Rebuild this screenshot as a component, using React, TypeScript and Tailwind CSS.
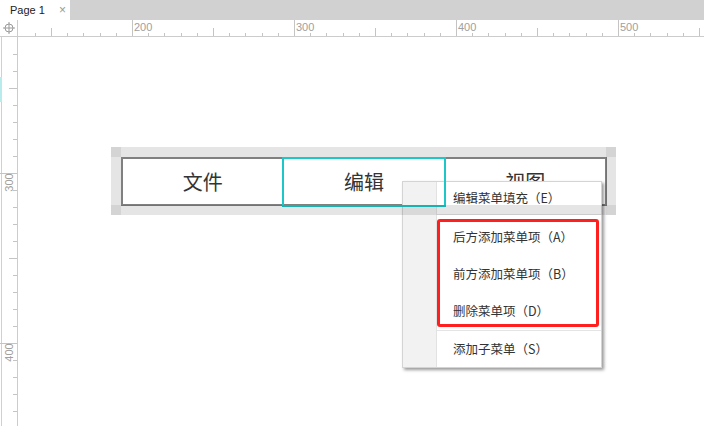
import React from 'react';

const TOP_TICKS = Array.from({ length: 46 }, (_, i) => i - 8).map((k) => ({
  x: 132 + k * 16.2,
  v: 200 + k * 10,
}));

const LEFT_TICKS = Array.from({ length: 25 }, (_, i) => i - 9).map((k) => ({
  y: 173 + k * 17,
  v: 300 + k * 10,
}));

function Crosshair() {
  return (
    <svg width="12" height="12" viewBox="0 0 12 12" className="text-[#9a9a9a]">
      <circle cx="6" cy="6" r="4" fill="none" stroke="currentColor" strokeWidth="1" />
      <path d="M6 0v12M0 6h12" stroke="currentColor" strokeWidth="1" />
    </svg>
  );
}

function TopRuler() {
  return (
    <div className="relative h-[17px] border-b border-[#cccccc] bg-white overflow-hidden">
      <div className="absolute left-0 top-0 w-[18px] h-full border-r border-[#cccccc] flex items-center justify-center bg-white z-10">
        <Crosshair />
      </div>
      {TOP_TICKS.filter((t) => t.x > 19 && t.x < 704).map((t) => {
        const major = t.v % 100 === 0;
        const mid = t.v % 50 === 0;
        return (
          <div key={t.v} className="absolute top-0 h-full" style={{ left: Math.round(t.x) }}>
            {major ? (
              <>
                <div className="absolute left-0 top-0 h-full w-px bg-[#c4c4c4]" />
                <span className="absolute left-[2px] top-[1px] text-[11px] leading-[12px] text-[#a0a0a0]">{t.v}</span>
              </>
            ) : (
              <div className={`absolute left-0 bottom-0 w-px bg-[#c4c4c4] ${mid ? 'h-[8px]' : 'h-[3px]'}`} />
            )}
          </div>
        );
      })}
    </div>
  );
}

function LeftRuler() {
  return (
    <div className="relative w-[18px] h-full border-r border-[#cccccc] bg-white overflow-hidden">
      <div className="absolute left-[1px] top-0 h-full w-px bg-[#d0d0d0]" />
      <div className="absolute left-0 top-[40px] h-[25px] w-[2px] bg-[#b8ecec]" />
      {LEFT_TICKS.filter((t) => t.y > 38 && t.y < 420).map((t) => {
        const major = t.v % 100 === 0;
        const mid = t.v % 50 === 0;
        const top = t.y - 37;
        return (
          <div key={t.v} className="absolute left-0 w-full" style={{ top }}>
            {major ? (
              <>
                <div className="absolute left-0 top-0 h-px w-full bg-[#c4c4c4]" />
                <span className="absolute left-0 top-[4px] -rotate-90 text-[11px] leading-[11px] text-[#a0a0a0]">{t.v}</span>
              </>
            ) : (
              <div className={`absolute right-0 top-0 h-px bg-[#c4c4c4] ${mid ? 'w-[8px]' : 'w-[4px]'}`} />
            )}
          </div>
        );
      })}
    </div>
  );
}

function MenuItem({ label, h }: { label: string; h: string }) {
  return (
    <div className={`flex items-center pl-4 text-[12.5px] text-[#333333] ${h}`}>{label}</div>
  );
}

function ContextMenu() {
  return (
    <div className="absolute left-[384px] top-[144px] w-[200px] z-20 flex border border-[#d4d4d4] bg-white shadow-[2px_2px_3px_rgba(0,0,0,0.4)] font-['Noto_Sans_CJK_SC','Liberation_Sans',sans-serif]">
      <div className="w-[34px] bg-[#f2f2f2] border-r border-[#e2e2e2]" />
      <div className="flex-1 flex flex-col">
        <MenuItem label="编辑菜单填充（E）" h="h-[32px]" />
        <div className="h-px bg-[#e4e4e4]" />
        <div className="h-[4px]" />
        <div className="relative">
          <MenuItem label="后方添加菜单项（A）" h="h-[37px]" />
          <MenuItem label="前方添加菜单项（B）" h="h-[37px]" />
          <MenuItem label="删除菜单项（D）" h="h-[37px]" />
          <div className="absolute left-0 right-[2px] top-0 bottom-[3px] border-[3px] border-[#ff1f1f] rounded-[3px]" />
        </div>
        <div className="h-px bg-[#e4e4e4]" />
        <MenuItem label="添加子菜单（S）" h="h-[36px]" />
      </div>
    </div>
  );
}

function MenuWidget() {
  return (
    <>
      <div className="absolute left-[103px] top-[120px] w-[486px] h-[49px] z-10 flex border-2 border-[#808080] bg-white text-[20px] text-[#333333] font-['Noto_Sans_CJK_SC',sans-serif]">
        <div className="flex-1 flex items-center justify-center">文件</div>
        <div className="w-[162px] flex items-center justify-center border-l border-[#9a9a9a]">编辑</div>
        <div className="flex-1 flex items-center justify-center border-l border-[#9a9a9a]">视图</div>
      </div>
      <div className="absolute left-[264px] top-[120px] w-[164px] h-[50px] z-30 border-2 border-[#1cc7c7]" />
      <div className="absolute left-[93px] top-[110px] w-[505px] h-[68px] z-30 border-[10px] border-black/10">
        <div className="absolute -left-[10px] -top-[10px] w-[10px] h-[10px] bg-black/[0.07]" />
        <div className="absolute -right-[10px] -top-[10px] w-[10px] h-[10px] bg-black/[0.07]" />
        <div className="absolute -left-[10px] -bottom-[10px] w-[10px] h-[10px] bg-black/[0.07]" />
        <div className="absolute -right-[10px] -bottom-[10px] w-[10px] h-[10px] bg-black/[0.07]" />
      </div>
    </>
  );
}

export default function App() {
  return (
    <div className="w-[704px] h-[426px] overflow-hidden bg-white flex flex-col font-['Liberation_Sans','Noto_Sans_CJK_SC',sans-serif]">
      <div className="h-5 bg-[#d1d1d1] flex">
        <div className="w-[70px] bg-white flex items-center pl-[10px] text-[11px] text-[#222222]">
          <span>Page 1</span>
          <span className="ml-[14px] text-[12px] text-[#9a9a9a]">×</span>
        </div>
      </div>
      <TopRuler />
      <div className="flex-1 flex">
        <LeftRuler />
        <div className="relative flex-1 bg-white">
          <MenuWidget />
          <ContextMenu />
        </div>
      </div>
    </div>
  );
}
